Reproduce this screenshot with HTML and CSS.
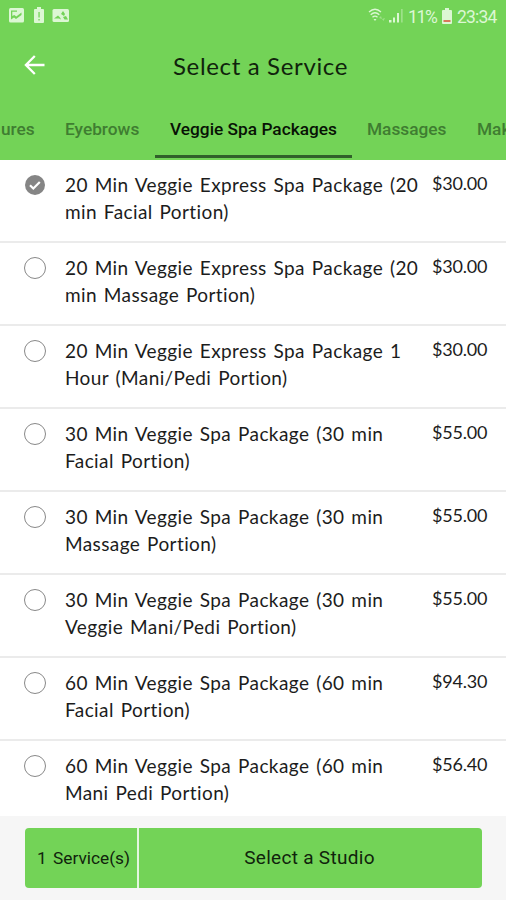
FILE: index.html
```
<!DOCTYPE html>
<html lang="en">

<head>
  <meta charset="utf-8">
  <title>Select a Service</title>
  <link rel="stylesheet" href="styles.css">
</head>

<body>
  <div class="header">
    <div class="status">
      <svg class="status-left" width="62" height="18" viewBox="0 0 62 18">
        <g fill="#dcf7d4">
          <rect x="1" y="1" width="15" height="14.500" rx="1.500"/>
          <path d="M27 2h2V0h4v2h2q1 0 1 1v12q0 1-1 1h-8q-1 0-1-1V3q0-1 1-1z"/>
          <rect x="44.500" y="2" width="16.500" height="13" rx="1.500"/>
        </g>
        <g fill="#73d357">
          <path d="M3 3.500h6v1.300H4.300V9l2-1 2 1.500 5.200-4V8L8 12l-2-1.500-3 2zM30.400 5h1.300v5.500h-1.300zM30.400 12h1.300v1.500h-1.300z"/>
          <path d="M46 11.500l4-3 2 2 1 2-2-1zM53 7l2-3 2 3-1 2zM55 10l3-1 2 3.500h-3.500z"/>
        </g>
      </svg>
      <div class="status-right">
        <svg class="signal" width="36" height="16" viewBox="0 0 36 16">
          <g fill="none" stroke="#dcf7d4" stroke-width="1.300">
            <path d="M1 5q6-5.500 12 0M2.700 7.700q4.300-4 8.600 0M4.500 10.300q2.500-2.400 5 0"/>
          </g>
          <g fill="#dcf7d4">
            <path d="M5.500 12h3L7 14zM21 13h2.500v2.500H21zM25 10.500h2v5h-2zM29 6h2v9.500h-2z"/>
            <path opacity=".4" d="M11 11l2-2 1 3zM14 12l3-1-1.500 3zM33 2h1.700v13.500H33z"/>
          </g>
        </svg>
        <span class="percent">11%</span>
        <svg class="battery" width="10" height="16" viewBox="0 0 10 16">
          <path fill="#dcf7d4" d="M1 2h2V0h4v2h2q1 0 1 1v12q0 1-1 1H1q-1 0-1-1V3q0-1 1-1z"/>
          <path fill="#d8795a" d="M1.500 12h7v2h-7z"/>
        </svg>
        <span class="clock">23:34</span>
      </div>
    </div>
    <div class="title-bar">
      <svg class="back" width="22" height="20" viewBox="0 0 22 20" fill="none" stroke="#fff" stroke-width="2.300">
        <path d="M20.500 10H2M10.800 1L1.900 10l8.900 9"/>
      </svg>
      <h1 class="title">Select a Service</h1>
    </div>
    <div class="tabs">
      <span class="tab tab-ures">ures</span>
      <span class="tab tab-eyebrows">Eyebrows</span>
      <span class="tab tab-active">Veggie Spa Packages</span>
      <span class="tab tab-massages">Massages</span>
      <span class="tab tab-makeup">Makeup</span>
    </div>
  </div>

  <div class="list">
    <div class="row">
      <svg class="check" width="22" height="22" viewBox="0 0 22 22">
        <circle cx="11" cy="11" r="10" fill="#858585"/>
        <path d="M6 11.300l3.300 3.200 6.500-6.500" fill="none" stroke="#fff" stroke-width="2.200"/>
      </svg>
      <div class="name">20 Min Veggie Express Spa Package (20<br>min Facial Portion)</div>
      <div class="price">$30.00</div>
    </div>
    <div class="row">
      <div class="radio"></div>
      <div class="name">20 Min Veggie Express Spa Package (20<br>min Massage Portion)</div>
      <div class="price">$30.00</div>
    </div>
    <div class="row">
      <div class="radio"></div>
      <div class="name">20 Min Veggie Express Spa Package 1<br>Hour (Mani/Pedi Portion)</div>
      <div class="price">$30.00</div>
    </div>
    <div class="row">
      <div class="radio"></div>
      <div class="name">30 Min Veggie Spa Package (30 min<br>Facial Portion)</div>
      <div class="price">$55.00</div>
    </div>
    <div class="row">
      <div class="radio"></div>
      <div class="name">30 Min Veggie Spa Package (30 min<br>Massage Portion)</div>
      <div class="price">$55.00</div>
    </div>
    <div class="row">
      <div class="radio"></div>
      <div class="name">30 Min Veggie Spa Package (30 min<br>Veggie Mani/Pedi Portion)</div>
      <div class="price">$55.00</div>
    </div>
    <div class="row">
      <div class="radio"></div>
      <div class="name">60 Min Veggie Spa Package (60 min<br>Facial Portion)</div>
      <div class="price">$94.30</div>
    </div>
    <div class="row">
      <div class="radio"></div>
      <div class="name">60 Min Veggie Spa Package (60 min<br>Mani Pedi Portion)</div>
      <div class="price">$56.40</div>
    </div>
  </div>

  <div class="footer">
    <div class="count">1 Service(s)</div>
    <div class="studio">Select a Studio</div>
  </div>
</body>
</html>
```
FILE: styles.css
```
* {
  box-sizing: border-box;
}

body {
  margin: 0;
  width: 506px;
  height: 900px;
  overflow: hidden;
  display: flex;
  flex-direction: column;
  background: #fff;
  color: #1c1c1c;
  font-family: Lato, sans-serif;
}

.header {
  height: 160px;
  flex: none;
  background: #73d357;
}

.status {
  height: 32px;
  display: flex;
  justify-content: space-between;
  padding: 7px 9px 0 8px;
}

.status-right {
  display: flex;
  font: 17.5px/20px Roboto, sans-serif;
  color: #dcf7d4;
}

.signal {
  margin-right: 4px;
}

.percent {
  width: 31px;
  letter-spacing: -1.3px;
}

.battery {
  margin: 1px 5px 0 3px;
}

.clock {
  width: 40px;
  letter-spacing: -0.8px;
}

.title-bar {
  height: 66px;
  display: flex;
  align-items: center;
  padding-left: 24px;
}

.title {
  margin: 0 0 0 127px;
  font-size: 24px;
  font-weight: 400;
  letter-spacing: 0.65px;
  color: #10230c;
  white-space: nowrap;
}

.tabs {
  height: 62px;
  display: flex;
  overflow: hidden;
  font: 500 17.3px/62px Roboto, sans-serif;
  color: #3f7d31;
  white-space: nowrap;
}

.tab {
  flex: none;
}

.tab-ures {
  width: 64px;
  padding-left: 1px;
}

.tab-eyebrows {
  width: 91px;
  padding-left: 1px;
}

.tab-active {
  width: 197px;
  height: 60px;
  text-align: center;
  color: #081205;
  border-bottom: 3px solid #31602a;
}

.tab-massages {
  width: 125px;
  padding-left: 15px;
}

.list {
  height: 656px;
  flex: none;
  overflow: hidden;
}

.row {
  height: 83px;
  display: flex;
  padding: 12px 0 0 24px;
  border-bottom: 2px solid #ebebeb;
}

.check {
  margin-top: 2px;
}

.radio {
  width: 22px;
  height: 22px;
  margin-top: 2px;
  border: 1px solid #888;
  border-radius: 50%;
}

.name {
  width: 367px;
  margin-top: -1px;
  padding-left: 19px;
  font-size: 19px;
  line-height: 27px;
  letter-spacing: 0.4px;
  word-spacing: 1.6px;
  white-space: nowrap;
}

.price {
  padding-left: 19px;
  font-size: 18px;
  line-height: 23px;
  letter-spacing: -0.2px;
}

.footer {
  flex: 1;
  display: flex;
  padding: 12px 24px 12px 25px;
  background: #f6f6f6;
  font: 17.3px/60px Roboto, sans-serif;
  color: #10230c;
}

.count {
  width: 114px;
  padding-left: 5px;
  border-right: 2px solid #e4f6df;
  border-radius: 4px 0 0 4px;
  background: #73d357;
  text-align: center;
  word-spacing: 2px;
}

.studio {
  flex: 1;
  padding-right: 2px;
  border-radius: 0 4px 4px 0;
  background: #73d357;
  text-align: center;
  font-size: 19px;
  letter-spacing: 0.3px;
}
```
